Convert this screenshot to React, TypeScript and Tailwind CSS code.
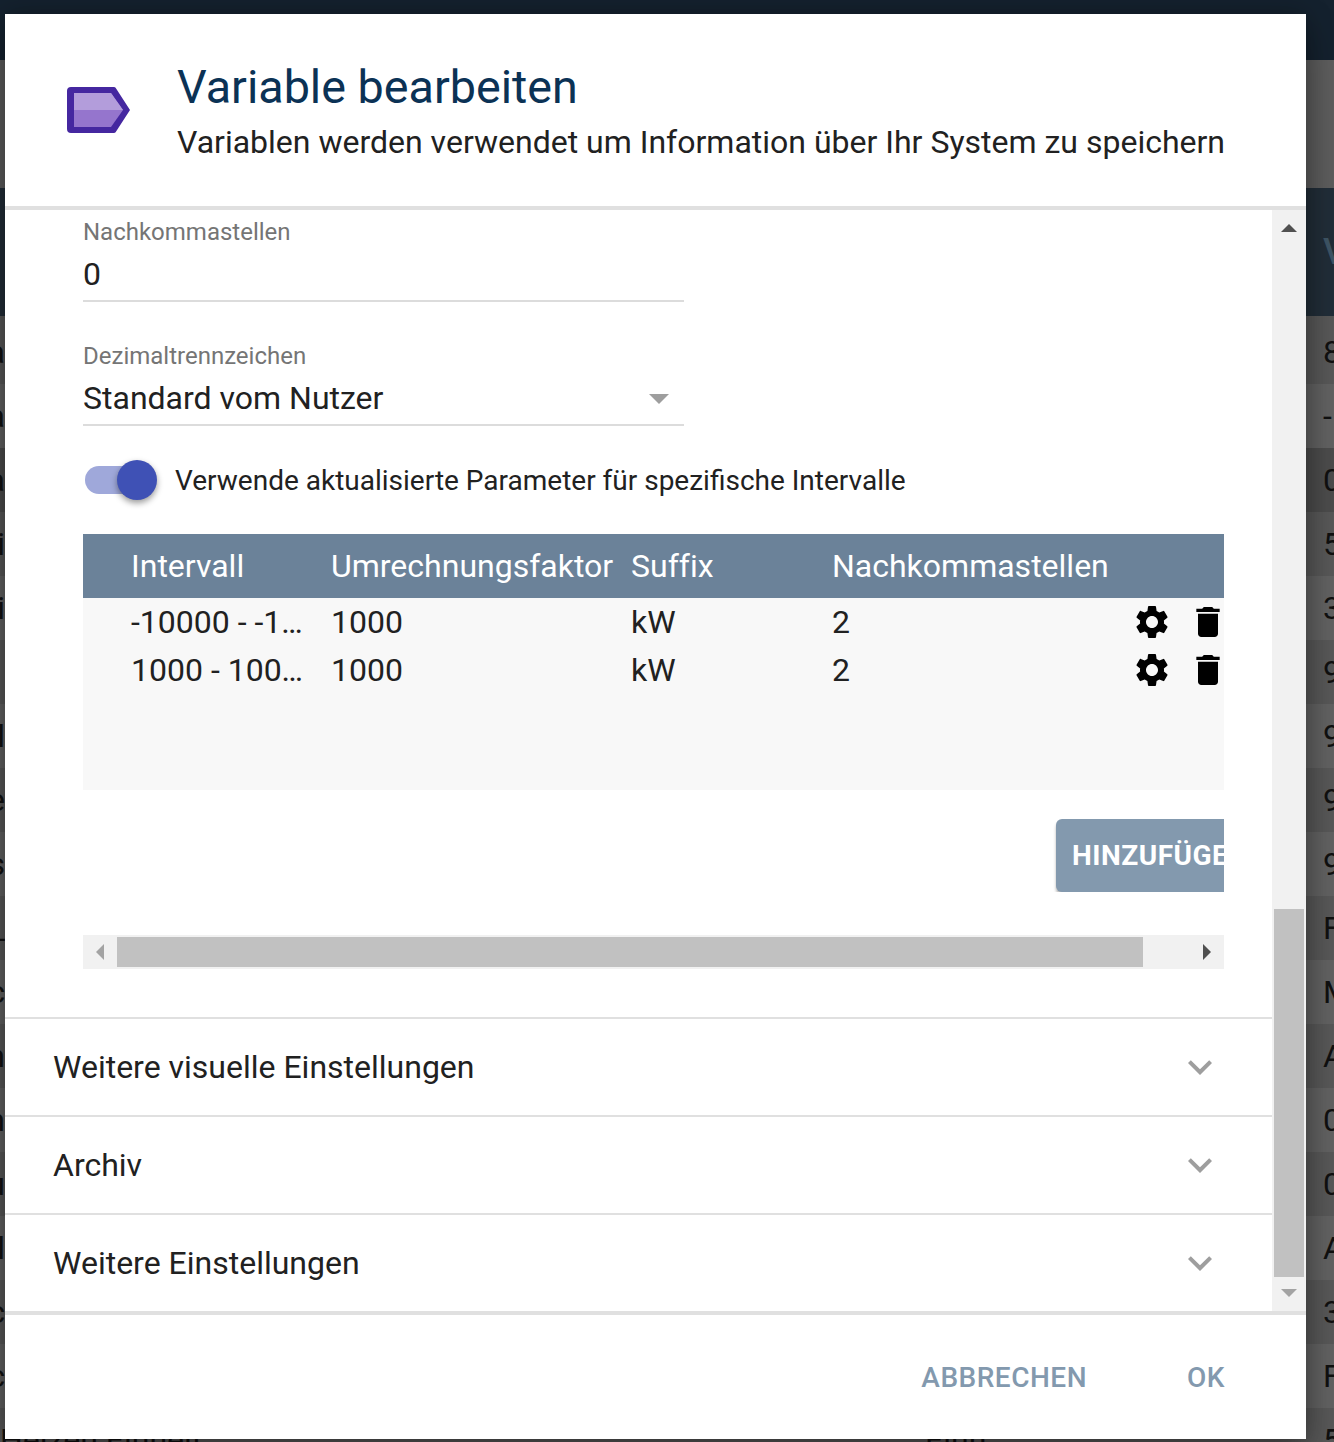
import { MdDelete, MdExpandMore, MdSettings } from 'react-icons/md';

const rows = [
  { left: 'a', right: '8', bg: 'bg-[#595959]' },
  { left: 'a', right: '-', bg: 'bg-[#636363]' },
  { left: 'a', right: '0', bg: 'bg-[#4d4d4d]' },
  { left: 'i', right: '5', bg: 'bg-[#595959]' },
  { left: 'i', right: '3', bg: 'bg-[#636363]' },
  { left: '', right: '9', bg: 'bg-[#595959]' },
  { left: 'l', right: '9', bg: 'bg-[#636363]' },
  { left: 'e', right: '9', bg: 'bg-[#595959]' },
  { left: 's', right: '9', bg: 'bg-[#636363]' },
  { left: '_', right: 'F', bg: 'bg-[#595959]' },
  { left: 'c', right: 'M', bg: 'bg-[#636363]' },
  { left: 'n', right: 'A', bg: 'bg-[#595959]' },
  { left: 'n', right: '0', bg: 'bg-[#636363]' },
  { left: 'u', right: '0', bg: 'bg-[#595959]' },
  { left: 'l', right: 'A', bg: 'bg-[#636363]' },
  { left: 'c', right: '3', bg: 'bg-[#595959]' },
  { left: 'c', right: 'F', bg: 'bg-[#636363]' },
];

const intervals = [
  { range: '-10000 - -1000', factor: '1000', suffix: 'kW', digits: '2' },
  { range: '1000 - 10000', factor: '1000', suffix: 'kW', digits: '2' },
];

const sections = ['Weitere visuelle Einstellungen', 'Archiv', 'Weitere Einstellungen'];

function VariableIcon() {
  return (
    <svg width="65" height="48" viewBox="0 0 65 48">
      <path d="M5 1h43a2 2 0 0 1 1.600.800L64 24 49.600 46.200a2 2 0 0 1-1.600.800H5a4 4 0 0 1-4-4V5a4 4 0 0 1 4-4z" fill="#4527a0" />
      <path d="M8 7h37l12 17-12 17H8z" fill="#9575cd" />
      <path d="M8 7h37l12 17H8z" fill="#b39ddb" />
    </svg>
  );
}

export default function App() {
  return (
    <div className="relative h-[1442px] w-[1334px] overflow-hidden bg-[#595959] font-['Roboto',sans-serif]">
      <div className="h-[60px] bg-[#15222f]" />
      <div className="h-[128px] bg-[#5e5e5e]" />
      <div className="flex h-[128px] items-center bg-[#222e39] pl-[1323px] text-[36px] font-medium text-[#3f5566]">V</div>
      {rows.map((row, i) => (
        <div key={i} className={`flex items-center justify-between text-[32px] text-[#111] ${i === 0 ? 'h-[68px] pt-[4px]' : 'h-[64px]'} ${row.bg}`}>
          <span className="flex w-[5px] justify-end">{row.left}</span>
          <span className="w-[11px] overflow-hidden">{row.right}</span>
        </div>
      ))}
      <div className="flex h-[64px] items-center bg-[#595959] text-[32px] text-[#111]">
        <span className="w-[925px]">Heizen Einheit</span>
        <span className="w-[398px]">Einh</span>
        <span className="w-[11px] overflow-hidden">5</span>
      </div>

      <div className="absolute left-[5px] top-[14px] flex h-[1425px] w-[1301px] flex-col bg-white shadow-[0_18px_36px_rgba(0,0,0,0.3),0_0_24px_rgba(0,0,0,0.25)]">
        <div className="flex h-[192px] shrink-0 items-center">
          <div className="ml-[61px] w-[111px]">
            <VariableIcon />
          </div>
          <div>
            <h1 className="text-[46.700px] leading-[56px] text-[#0b3255]">Variable bearbeiten</h1>
            <p className="mt-[7px] text-[32px] leading-[40px] text-[#212121]">Variablen werden verwendet um Information über Ihr System zu speichern</p>
          </div>
        </div>

        <div className="flex h-[1109px] shrink-0 border-y-[4px] border-[#e0e0e0]">
          <div className="w-[1267px] overflow-hidden">
            <div className="pl-[78px] pt-[6px]">
              <label className="block text-[24px] leading-[32px] text-[#757575]">Nachkommastellen</label>
              <div className="h-[54px] w-[601px] border-b-2 border-[#dcdcdc] pt-[6px] text-[32px] leading-[40px] text-[#212121]">0</div>
              <label className="mt-[38px] block text-[24px] leading-[32px] text-[#757575]">Dezimaltrennzeichen</label>
              <div className="flex h-[54px] w-[601px] items-start justify-between border-b-2 border-[#dcdcdc] pr-[15px] pt-[6px] text-[32px] leading-[40px] text-[#212121]">
                <span>Standard vom Nutzer</span>
                <span className="mt-[16px] border-x-[10px] border-t-[10px] border-x-transparent border-t-[#9e9e9e]" />
              </div>
              <div className="mt-[34px] flex h-[40px] items-center">
                <div className="relative ml-[2px] h-[28px] w-[60px] rounded-full bg-[#9fa8da]">
                  <span className="absolute left-[32px] top-[-6px] h-[40px] w-[40px] rounded-full bg-[#3f51b5] shadow-[0_3px_6px_rgba(0,0,0,0.4)]" />
                </div>
                <span className="ml-[30px] mt-[1px] text-[28px] text-[#212121]">Verwende aktualisierte Parameter für spezifische Intervalle</span>
              </div>

              <div className="mt-[34px] w-[1141px] overflow-hidden">
                <div className="flex h-[64px] items-center bg-[#6b8299] pl-[48px] text-[32px] text-white">
                  <span className="w-[200px]">Intervall</span>
                  <span className="w-[300px]">Umrechnungsfaktor</span>
                  <span className="w-[201px] [font-variant-ligatures:none]">Suffix</span>
                  <span>Nachkommastellen</span>
                </div>
                <div className="h-[192px] bg-[#f8f8f8]">
                  {intervals.map((item) => (
                    <div key={item.range} className="flex h-[48px] items-center pl-[48px] text-[32px] text-[#212121]">
                      <span className="w-[173px] shrink-0 truncate">{item.range}</span>
                      <span className="ml-[27px] w-[300px] shrink-0">{item.factor}</span>
                      <span className="w-[201px] shrink-0">{item.suffix}</span>
                      <span className="w-[300px] shrink-0">{item.digits}</span>
                      <MdSettings className="shrink-0 text-black" size={40} />
                      <MdDelete className="ml-[16px] shrink-0 text-black" size={40} />
                    </div>
                  ))}
                </div>
                <div className="flex justify-end overflow-hidden pt-[29px]">
                  <button className="h-[73px] w-[168px] shrink-0 overflow-hidden whitespace-nowrap rounded-l-[6px] bg-[#8399ae] pl-[16px] text-left text-[28px] font-bold tracking-[0.5px] text-white shadow-[0_3px_3px_rgba(0,0,0,0.3)]">
                    HINZUFÜGEN
                  </button>
                </div>
                <div className="mt-[43px] flex h-[34px] items-center bg-[#f1f1f1]">
                  <span className="ml-[13px] border-y-[8px] border-r-[8px] border-y-transparent border-r-[#a3a3a3]" />
                  <span className="ml-[13px] h-[30px] w-[1026px] bg-[#c1c1c1]" />
                  <span className="ml-[60px] border-y-[8px] border-l-[8px] border-y-transparent border-l-[#505050]" />
                </div>
              </div>
            </div>

            <div className="mt-[48px]">
              {sections.map((title) => (
                <div key={title} className="flex h-[98px] items-center justify-between border-t-2 border-[#e0e0e0] pl-[48px] pr-[48px] text-[32px] text-[#212121]">
                  <span>{title}</span>
                  <MdExpandMore className="text-[#9e9e9e]" size={48} />
                </div>
              ))}
            </div>
          </div>

          <div className="flex w-[34px] flex-col items-center bg-[#f1f1f1]">
            <span className="mt-[14px] border-x-[8px] border-b-[8px] border-x-transparent border-b-[#505050]" />
            <span className="mt-[677px] h-[368px] w-[30px] bg-[#c1c1c1]" />
            <span className="mt-[12px] border-x-[8px] border-t-[8px] border-x-transparent border-t-[#a3a3a3]" />
          </div>
        </div>

        <div className="flex flex-1 items-center justify-end pr-[81px] pt-[2px] text-[28px] font-medium tracking-[0.5px] text-[#8399ae]">
          <span>ABBRECHEN</span>
          <span className="ml-[100px]">OK</span>
        </div>
      </div>
    </div>
  );
}
